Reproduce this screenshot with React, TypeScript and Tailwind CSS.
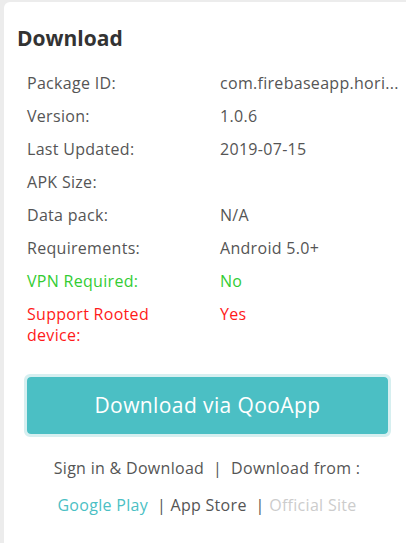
const rows = [
  { label: 'Package ID:', value: 'com.firebaseapp.hori...', tone: 'text-[#555]' },
  { label: 'Version:', value: '1.0.6', tone: 'text-[#555]' },
  { label: 'Last Updated:', value: '2019-07-15', tone: 'text-[#555]' },
  { label: 'APK Size:', value: '', tone: 'text-[#555]' },
  { label: 'Data pack:', value: 'N/A', tone: 'text-[#555]' },
  { label: 'Requirements:', value: 'Android 5.0+', tone: 'text-[#555]' },
  { label: 'VPN Required:', value: 'No', tone: 'text-[#33cc33]' },
  { label: 'Support Rooted device:', value: 'Yes', tone: 'text-[#ff1a1a]' },
];

const App = () => {
  return (
    <div className="h-[543px] w-[406px] overflow-hidden bg-[#ececec] pl-[4px] pt-[2px] font-['Open_Sans',sans-serif]">
      <div className="h-[600px] w-[420px] rounded-[6px] bg-white pl-[13px] pt-[22px]">
        <h2 className="text-[21px] font-bold leading-[28px] text-[#333]">Download</h2>
        <div className="mt-[15px] w-[385px] pl-[10px]">
          {rows.map((r) => (
            <div key={r.label} className={`flex py-[6px] text-[16px] leading-[21px] tracking-[0.3px] ${r.tone}`}>
              <div className="w-[193px] shrink-0 pr-[30px]">{r.label}</div>
              <div className="w-[180px] whitespace-nowrap">{r.value}</div>
            </div>
          ))}
        </div>
        <div className="mt-[22px] w-[367px] ml-[7px] rounded-[6px] border-[3px] border-[#d6eff0]">
          <button className="flex h-[57px] w-full items-center justify-center rounded-[4px] bg-[#4bbfc4] text-[21px] tracking-[0.4px] text-white">
            Download via QooApp
          </button>
        </div>
        <p className="mt-[21px] w-[380px] text-center text-[16px] leading-[21px] tracking-[0.3px] text-[#555]">
          Sign in &amp; Download&nbsp; |&nbsp; Download from :
        </p>
        <p className="mt-[16px] w-[380px] text-center text-[16px] leading-[21px] tracking-[0.3px] text-[#555]">
          <span className="text-[#4bbfc4]">Google Play</span> &nbsp;| App Store &nbsp;|{' '}
          <span className="text-[#cccccc]">Official Site</span>
        </p>
      </div>
    </div>
  );
};

export default App;
